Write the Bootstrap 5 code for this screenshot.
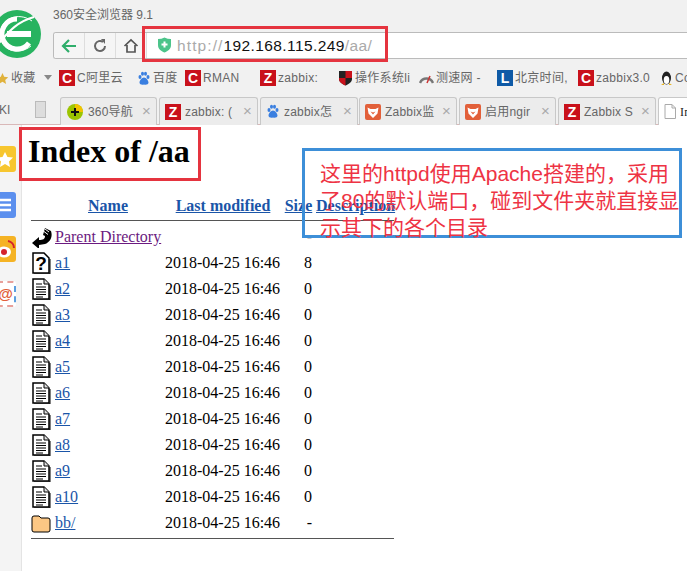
<!DOCTYPE html>
<html lang="zh">
<head>
<meta charset="utf-8">
<title>Index of /aa</title>
<link rel="stylesheet" href="https://cdn.jsdelivr.net/npm/bootstrap@5.3.0/dist/css/bootstrap.min.css">
<style>
html,body{height:100%;overflow:hidden}
body{width:687px;height:571px;background:#fff;position:relative;font-family:"Liberation Sans","Noto Sans CJK SC",sans-serif;color:#555}
.chrome{height:125px;background:#f1f1f1;overflow:hidden;border-bottom:1px solid #d9b8b8}
.title-row{height:32px;padding:7px 0 0 53px;font-size:12px;color:#666;line-height:16px;white-space:nowrap}
.logo{position:absolute;left:-8px;top:9px}
.addr-row{height:27px;margin-left:53px;background:#fff;border:1px solid #bbb;border-right:0;border-radius:3px 0 0 3px;overflow:hidden}
.nav-cell{width:31px;border-right:1px solid #ddd;background:#f5f5f5}
.url{padding-left:30px;font-size:15.500px;line-height:25px;color:#aaa;letter-spacing:.4px;position:relative;white-space:nowrap}
.url b{font-weight:400;color:#111}
.scheme{letter-spacing:1.100px}
.shield{position:absolute;left:10px;top:4px}
.bm-row{height:31px}
.bm{position:absolute;top:70px;display:flex;align-items:center;gap:2px;height:16px;line-height:16px;font-size:12px;color:#666;white-space:nowrap;letter-spacing:.3px}
.sq{width:16px;height:16px;flex:none;display:flex;align-items:center;justify-content:center;color:#fff;font:bold 14px/16px "Liberation Sans",sans-serif;background:#c9111b;letter-spacing:0}
.sq-l{background:#0f5aa6}
.tab-row{height:34px;position:relative;overflow:hidden}
.tabx{position:absolute;top:97px;height:28px;background:#ececec;border:1px solid #c8c8c8;border-bottom:0;border-radius:3px 3px 0 0;font-size:12px;color:#666;display:flex;align-items:center;padding-left:5px;gap:4px;white-space:nowrap;overflow:hidden;letter-spacing:.2px}
.tabx.on{background:#fff}
.tabx i{position:absolute;right:5px;top:5px;font-style:normal;font-size:15px;color:#aaa;background:#ececec;line-height:16px;padding-left:3px}
.main{height:446px;position:relative;overflow:hidden}
.side{position:absolute;left:0;top:0;width:22px;height:100%;background:#f4f4f4;border-right:1px solid #e4e4e4;overflow:hidden}
.sic{position:absolute;left:-6px;width:22px;height:26px;border-radius:3px}
.doc{padding-left:28px;font-family:"Liberation Serif",serif;color:#000;font-size:16px}
.doc h1{font:bold 32px/37px "Liberation Serif",serif;margin:0;padding-top:8px;height:72px}
.doc a{color:#1a55a8;text-decoration:underline}
.doc a.vis{color:#6b1a80}
.ltab{border-collapse:collapse;margin-left:3px;table-layout:fixed;width:363px}
.ltab td,.ltab th{padding:0;height:26px;line-height:18px;white-space:nowrap;vertical-align:middle}
.ltab th{text-align:center;font-weight:700;height:20px;vertical-align:top}
.ltab th.nm{padding-right:4px}
.ltab td.r{text-align:right;padding-right:4px}
.ltab tr.ln td{height:7px;vertical-align:middle}
.ltab tr.ln.end td{height:5px}
.ltab hr{margin:0;border:0;border-top:1px solid #555;opacity:1}
.ltab svg{display:block}
.box-red{position:absolute;border:3px solid #e5343f;pointer-events:none}
.box-blue{position:absolute;left:302px;top:148px;width:380px;height:90px;border:3px solid #3d8fd8;color:#ee3344;font-size:21px;line-height:27px;padding:9px 0 0 15px;font-family:"Liberation Sans","Noto Sans CJK SC",sans-serif}
.note-text{width:361px}
</style>
</head>
<body>
<svg width="0" height="0" class="position-absolute">
  <symbol id="ifile" viewBox="0 0 20 22"><path d="M2 1h11l5 5v15H2z" fill="#fff" stroke="#000" stroke-width="1.500"/><path d="M13 1v5h5" fill="#ddd" stroke="#000"/><path d="M19 7v15H3" fill="none" stroke="#000"/><path d="M5 6h6M5 9h10M5 11.500h10M5 14h10M5 16.500h10M5 19h7" stroke="#000" stroke-width="1.200"/></symbol>
  <symbol id="ibaidu" viewBox="0 0 14 15"><g fill="#3a7fe0"><ellipse cx="3" cy="6" rx="1.500" ry="2"/><ellipse cx="5.500" cy="2.800" rx="1.500" ry="2"/><ellipse cx="8.500" cy="2.800" rx="1.500" ry="2"/><ellipse cx="11" cy="6" rx="1.500" ry="2"/><path d="M7 6.500c-2 0-4.500 3-4.500 5S5 14 7 13.500c2 .5 4.500 0 4.500-2s-2.500-5-4.500-5z"/></g></symbol>
  <symbol id="ifox" viewBox="0 0 16 16"><rect width="16" height="16" rx="2" fill="#e2603a"/><path d="M2.500 3.500l3 1.500h5l3-1.500-1 6L8 14 3.500 9.500z" fill="#fff"/><path d="M5.500 7.500l2.500 3 2.500-3L8 8.500z" fill="#e2603a"/></symbol>
</svg>
<div class="chrome">
  <svg class="logo" width="50" height="50" viewBox="0 0 50 50"><circle cx="25" cy="25" r="24" fill="#27b360"/><path d="M40 12C26 2 8 10 8 26c0 14 17 22 31 11" fill="none" stroke="#fff" stroke-width="1"/><path d="M25 10a15 15 0 1 0 12 24" fill="none" stroke="#fff" stroke-width="5"/><rect x="15" y="22" width="24" height="6" fill="#fff"/><path d="M3 38C12 30 20 14 42 8" fill="none" stroke="#fff" stroke-width="2"/></svg>
  <div class="title-row">360安全浏览器 9.1</div>
  <div class="addr-row d-flex">
    <div class="nav-cell d-flex align-items-center justify-content-center flex-none"><svg width="18" height="18" viewBox="0 0 18 18"><path d="M16 9H3M9 3 3 9l6 6" fill="none" stroke="#2fae6b" stroke-width="2.200"/></svg></div>
    <div class="nav-cell d-flex align-items-center justify-content-center flex-none"><svg width="16" height="16" viewBox="0 0 16 16"><path d="M13 8a5 5 0 1 1-2-4" fill="none" stroke="#666" stroke-width="2"/><path d="M9 1l4 0 0 5z" fill="#666"/></svg></div>
    <div class="nav-cell d-flex align-items-center justify-content-center flex-none"><svg width="16" height="16" viewBox="0 0 16 16"><path d="M1.500 8 8 2l6.500 6M4 7v7h8V7" fill="none" stroke="#555" stroke-width="1.700"/></svg></div>
    <div class="url flex-grow-1"><svg class="shield" width="15" height="16" viewBox="0 0 15 16"><path d="M1 2q3.500 0 6.500-1.500Q10.500 2 14 2v6c0 4-3 6-6.500 7.500C4 14 1 12 1 8z" fill="#4cc48a"/><path d="M7.500 4.500v6M4.500 7.500h6" stroke="#fff" stroke-width="2"/></svg><span><span class="scheme">http://</span><b>192.168.115.249</b>/aa/</span></div>
  </div>
  <div class="bm-row"></div>
  <div class="bm" style="left:-4px"><svg width="13" height="13" viewBox="0 0 13 13"><path d="M6.500 1l1.700 3.800 4 .4-3 2.700.9 4-3.600-2.100-3.600 2.100.9-4-3-2.700 4-.4z" fill="#e0b23c"/></svg><span>收藏</span></div>
  <svg class="position-absolute" style="left:44px;top:75px" width="8" height="5"><path d="M0 0h8L4 5z" fill="#888"/></svg>
  <div class="bm" style="left:59px"><span class="sq">C</span><span>C阿里云</span></div>
  <div class="bm" style="left:137px"><svg width="14" height="15"><use href="#ibaidu"/></svg><span>百度</span></div>
  <div class="bm" style="left:185px"><span class="sq">C</span><span>RMAN</span></div>
  <div class="bm" style="left:260px"><span class="sq">Z</span><span>zabbix:</span></div>
  <div class="bm" style="left:338px"><svg width="15" height="16" viewBox="0 0 15 16"><path d="M1 1h13v8c0 3-3 5-6.500 6.500C4 14 1 12 1 9z" fill="#222"/><path d="M7.500 1H14v7H7.500zM1 8h6.500v7.500C4 14 1 12 1 9z" fill="#c9111b"/></svg><span>操作系统li</span></div>
  <div class="bm" style="left:419px"><svg width="15" height="12" viewBox="0 0 15 12"><path d="M1 11a7 7 0 0 1 13 0" fill="none" stroke="#777" stroke-width="2.500"/><path d="M8 11l3-7" stroke="#c33" stroke-width="1.500"/></svg><span>测速网 -</span></div>
  <div class="bm" style="left:497px"><span class="sq sq-l">L</span><span>北京时间,</span></div>
  <div class="bm" style="left:578px"><span class="sq">C</span><span>zabbix3.0</span></div>
  <div class="bm" style="left:660px"><svg width="13" height="16" viewBox="0 0 13 16"><ellipse cx="6.500" cy="8" rx="4.500" ry="6.500" fill="#222"/><ellipse cx="6.500" cy="10" rx="2.800" ry="4" fill="#fff"/><path d="M1 15l3-2v2zM12 15l-3-2v2z" fill="#e8b21c"/></svg><span>Co</span></div>
  <div class="tab-row"></div>
  <div class="position-absolute" style="left:-1px;top:102px;font-size:12px;color:#666;line-height:16px">KI</div>
  <div class="position-absolute" style="left:35px;top:101px;width:11px;height:17px;background:#ddd;border:1px solid #bbb"></div>
  <div class="tabx" style="left:60px;width:97px"><svg width="18" height="18" viewBox="0 0 18 18" class="flex-none"><circle cx="9" cy="9" r="8" fill="#9cc400"/><path d="M9 1a8 8 0 0 1 8 8H9z" fill="#f3c200"/><path d="M9 5v8M5 9h8" stroke="#111" stroke-width="2"/></svg><span>360导航</span><i>×</i></div>
  <div class="tabx" style="left:159px;width:99px"><span class="sq">Z</span><span>zabbix: (</span><i>×</i></div>
  <div class="tabx" style="left:260px;width:98px"><svg width="14" height="15" class="flex-none"><use href="#ibaidu"/></svg><span>zabbix怎</span><i>×</i></div>
  <div class="tabx" style="left:359px;width:98px"><svg width="16" height="16" class="flex-none"><use href="#ifox"/></svg><span>Zabbix监</span><i>×</i></div>
  <div class="tabx" style="left:459px;width:97px"><svg width="16" height="16" class="flex-none"><use href="#ifox"/></svg><span>启用ngir</span><i>×</i></div>
  <div class="tabx" style="left:558px;width:98px"><span class="sq">Z</span><span>Zabbix S</span><i>×</i></div>
  <div class="tabx on" style="left:658px;width:60px"><svg width="12" height="15" viewBox="0 0 12 15" class="flex-none"><path d="M1 .5h7l3.500 3.500v10.500H1zM8 .5V4h3.500" fill="#fff" stroke="#aaa"/></svg><span style="font-family:'Liberation Serif',serif;color:#222">In</span></div>
</div>
<div class="main">
  <div class="side">
    <div class="sic" style="top:21px;background:#f7c62f"><svg width="22" height="26" viewBox="0 0 22 26"><path d="M11 6l2.500 5 5.500.5-4 4 1 5.500-5-3-5 3 1-5.500-4-4 5.500-.5z" fill="#fff"/></svg></div>
    <div class="sic" style="top:67px;background:#5b8fee"><svg width="22" height="26" viewBox="0 0 22 26"><path d="M6 8h11M6 13h11M6 18h11" stroke="#fff" stroke-width="2.500"/></svg></div>
    <div class="sic" style="top:111px;background:#f5b324"><svg width="22" height="26" viewBox="0 0 22 26"><ellipse cx="10" cy="16" rx="7" ry="5.500" fill="#fff"/><circle cx="10" cy="16" r="3" fill="#d4232b"/><path d="M14 5a7 7 0 0 1 6 7" stroke="#d4232b" stroke-width="2" fill="none"/></svg></div>
    <div class="sic" style="top:156px;border:2px dashed #e8a09a;border-right-color:#5b9fe0;background:#fff;color:#e2603a;font:bold 15px/22px 'Liberation Sans',sans-serif;text-align:right;padding-right:1px;overflow:hidden">@</div>
  </div>
  <div class="doc">
    <h1>Index of /aa</h1>
    <table class="ltab">
      <colgroup><col style="width:24px"><col style="width:110px"><col style="width:116px"><col style="width:35px"><col style="width:78px"></colgroup>
      <tr><th></th><th class="nm"><a href="#">Name</a></th><th><a href="#">Last modified</a></th><th><a href="#">Size</a></th><th><a href="#">Description</a></th></tr>
      <tr class="ln"><td colspan="5"><hr></td></tr>
      <tr><td><svg width="22" height="22" viewBox="0 0 22 22"><path d="M1 17l7-6v3c4 0 6-1 6-4l-2-1 2-7 6 3c2 6-1 11-6 13l-6 1v4z" fill="#000"/><path d="M14 3l4 3M13 5.500l4 3" stroke="#fff"/></svg></td><td><a class="vis" href="#">Parent Directory</a></td><td></td><td class="r">-</td><td></td></tr>
      <tr><td><svg width="20" height="22" viewBox="0 0 20 22"><path d="M2 1h11l5 5v15H2z" fill="#fff" stroke="#000" stroke-width="1.500"/><path d="M19 7v15H3" fill="none" stroke="#000"/><text x="10" y="18" text-anchor="middle" font-family="Liberation Sans" font-weight="700" font-size="19">?</text></svg></td><td><a href="#">a1</a></td><td>2018-04-25 16:46</td><td class="r">8</td><td></td></tr>
      <tr><td><svg width="20" height="22"><use href="#ifile"/></svg></td><td><a href="#">a2</a></td><td>2018-04-25 16:46</td><td class="r">0</td><td></td></tr>
      <tr><td><svg width="20" height="22"><use href="#ifile"/></svg></td><td><a href="#">a3</a></td><td>2018-04-25 16:46</td><td class="r">0</td><td></td></tr>
      <tr><td><svg width="20" height="22"><use href="#ifile"/></svg></td><td><a href="#">a4</a></td><td>2018-04-25 16:46</td><td class="r">0</td><td></td></tr>
      <tr><td><svg width="20" height="22"><use href="#ifile"/></svg></td><td><a href="#">a5</a></td><td>2018-04-25 16:46</td><td class="r">0</td><td></td></tr>
      <tr><td><svg width="20" height="22"><use href="#ifile"/></svg></td><td><a href="#">a6</a></td><td>2018-04-25 16:46</td><td class="r">0</td><td></td></tr>
      <tr><td><svg width="20" height="22"><use href="#ifile"/></svg></td><td><a href="#">a7</a></td><td>2018-04-25 16:46</td><td class="r">0</td><td></td></tr>
      <tr><td><svg width="20" height="22"><use href="#ifile"/></svg></td><td><a href="#">a8</a></td><td>2018-04-25 16:46</td><td class="r">0</td><td></td></tr>
      <tr><td><svg width="20" height="22"><use href="#ifile"/></svg></td><td><a href="#">a9</a></td><td>2018-04-25 16:46</td><td class="r">0</td><td></td></tr>
      <tr><td><svg width="20" height="22"><use href="#ifile"/></svg></td><td><a href="#">a10</a></td><td>2018-04-25 16:46</td><td class="r">0</td><td></td></tr>
      <tr><td><svg width="20" height="20" viewBox="0 0 20 20"><path d="M1 5q0-2 2-2h5l2 2h7q2 0 2 2v10q0 2-2 2H3q-2 0-2-2z" fill="#fcc784" stroke="#000"/></svg></td><td><a href="#">bb/</a></td><td>2018-04-25 16:46</td><td class="r">-</td><td></td></tr>
      <tr class="ln end"><td colspan="5"><hr></td></tr>
    </table>
  </div>
</div>
<div class="box-red" style="left:142px;top:26px;width:246px;height:36px"></div>
<div class="box-red" style="left:19px;top:127px;width:182px;height:54px"></div>
<div class="box-blue"><div class="note-text">这里的httpd使用Apache搭建的，采用了80的默认端口，碰到文件夹就直接显示其下的各个目录</div></div>
</body>
</html>
